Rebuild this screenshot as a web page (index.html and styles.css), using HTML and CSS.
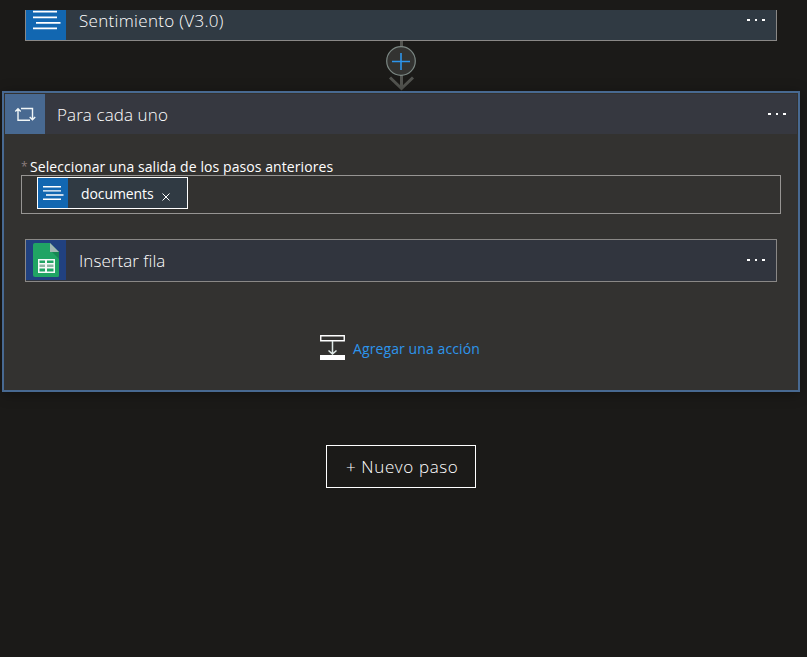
FILE: index.html
```html
<!DOCTYPE html>
<html lang="es">
<head>
<meta charset="utf-8">
<title>Flujo</title>
<link rel="stylesheet" href="styles.css">
</head>
<body>
<main class="canvas">
  <section class="card card-cut">
    <div class="tile tile-text">
      <svg width="40" height="30" viewBox="0 0 40 30"><path d="M7 1.7H31M7 7.4H31M10 12.9H34.500M7 18.400H31" stroke="#fff" stroke-width="1.8"/></svg>
    </div>
    <h2 class="title t-sent">Sentimiento (V3.0)</h2>
    <span class="dots"><i></i><i></i><i></i></span>
  </section>

  <div class="connector">
    <svg width="32" height="50" viewBox="0 0 32 50">
      <path d="M16.500 0V47" stroke="#52534f" stroke-width="3"/>
      <path d="M5 36.500L16.500 47.500L28 36.500" fill="none" stroke="#52534f" stroke-width="3"/>
      <circle cx="16" cy="20" r="14.300" fill="#333331" stroke="#7b8783" stroke-width="1.200"/>
      <path d="M7 20.500H25M16 12V29" stroke="#2d95ec" stroke-width="1.600"/>
    </svg>
  </div>

  <section class="scope">
    <header class="scope-head">
      <div class="tile tile-loop">
        <svg width="40" height="40" viewBox="0 0 40 40"><path d="M13 15V26.300H25M10.300 17.500L13 14.800L15.700 17.500M16 14.500H27.500V25M24.700 23L27.500 25.800L30.200 23" fill="none" stroke="#f0f6f7" stroke-width="1.400"/></svg>
      </div>
      <h2 class="title t-loop">Para cada uno</h2>
      <span class="dots"><i></i><i></i><i></i></span>
    </header>
    <div class="scope-body">
      <label class="label"><span class="req">*</span><span class="label-text">Seleccionar una salida de los pasos anteriores</span></label>
      <div class="field">
        <div class="token">
          <div class="tile tile-token">
            <svg width="30" height="30" viewBox="0 0 30 30"><path d="M5 8.700H23M5 12.900H23M8 17H25.500M5 21.200H23" stroke="#fff" stroke-width="1.400"/></svg>
          </div>
          <span class="token-text">documents</span>
          <svg class="close" width="8" height="8" viewBox="0 0 8 8"><path d="M.5 .5L7.500 7.500M7.500 .5L.5 7.500" stroke="#fff" stroke-width="1"/></svg>
        </div>
      </div>
      <section class="card card-row">
        <div class="tile tile-sheet">
          <svg width="40" height="40" viewBox="0 0 40 40">
            <path d="M9 3H24L33 12V35.500Q33 37 31.500 37H9Q7 37 7 35V5Q7 3 9 3Z" fill="#20a464"/>
            <path d="M25 11L33 19V11Z" fill="#168653"/>
            <path d="M24 3L33 12H24Z" fill="#a4b8b4"/>
            <path d="M12 19H29V33H12Z" fill="#f4f9f8"/>
            <path d="M13.500 20.500H19V23H13.500ZM21 20.500H27.500V23H21ZM13.500 28.500H19V31.500H13.500ZM21 28.500H27.500V31.500H21Z" fill="#20a464"/>
            <path d="M13.500 24.500H19V27H13.500ZM21 24.500H27.500V27H21Z" fill="#8fb5a5"/>
          </svg>
        </div>
        <h2 class="title t-row">Insertar fila</h2>
        <span class="dots"><i></i><i></i><i></i></span>
      </section>
      <a class="add">
        <svg width="25" height="25" viewBox="0 0 25 25"><path d="M.75 .75H24.250V5.750H.75Z" fill="none" stroke="#fff" stroke-width="1.400"/><path d="M12.500 6V19M8.500 15.500L12.500 19L16.500 15.500" fill="none" stroke="#dfe9e7" stroke-width="1.500"/><path d="M0 20H25V25H0Z" fill="#fff"/></svg>
        <span class="add-text">Agregar una acción</span>
      </a>
    </div>
  </section>

  <button class="new-step"><span class="new-text">+ Nuevo paso</span></button>
</main>
</body>
</html>
```
FILE: styles.css
```css
* { box-sizing: border-box; }
body { margin: 0; background: #1b1a18; color: #fff; font-family: "Open Sans", "Noto Sans", sans-serif; font-weight: 400; }
svg { display: block; flex: none; }
.canvas { height: 657px; padding-top: 10px; overflow: hidden; display: flex; flex-direction: column; }
.card { display: flex; border: 1px solid #8a8886; width: 752px; }
.card-cut { height: 31px; flex: none; margin-left: 25px; border-top: 0; background: #303a43; }
.card-row { height: 43px; margin: 25px 0 0 21px; background: #31353e; }
.tile { width: 40px; height: 40px; flex: none; }
.tile-text { height: 30px; background: #1267b1; }
.tile-loop { background: #486991; }
.tile-sheet { background: #21417f; }
.tile-token { width: 30px; height: 30px; background: #1267b1; }
.title { margin: 0 0 0 13px; font-size: 17px; font-weight: 300; line-height: 42px; white-space: nowrap; }
.t-sent { line-height: 22px; letter-spacing: .32px; }
.t-loop { margin-left: 12px; letter-spacing: .1px; }
.t-row { letter-spacing: .05px; }
.dots { display: flex; justify-content: space-between; width: 18px; height: 2px; margin: 19px 11px 0 auto; }
.dots i { width: 3px; background: #fff; }
.dots i:nth-child(2) { width: 2px; }
.card-cut .dots { margin-top: 9px; }
.connector { height: 50px; padding-left: 385px; flex: none; }
.scope { width: 798px; height: 301px; flex: none; margin-left: 2px; border: 2px solid #486991; background: #333230; box-shadow: 0 2px 12px rgba(0, 0, 0, .35); }
.scope-head { display: flex; height: 40px; margin: 1px 1px 0; background: #363840; }
.scope-body { display: flex; flex-direction: column; }
.label { display: flex; height: 20px; margin: 21px 0 0 17px; font-size: 14px; line-height: 24px; white-space: nowrap; }
.label-text { letter-spacing: .085px; }
.req { width: 9px; color: #8b7c7c; font-size: 12px; }
.field { width: 760px; height: 39px; margin-left: 17px; padding: 1px 0 0 15px; border: 1px solid #979593; }
.token { display: flex; width: 151px; height: 32px; border: 1px solid #fff; background: #303a43; }
.token-text { width: 74px; margin-left: 13px; font-size: 14px; letter-spacing: -.1px; line-height: 31px; white-space: nowrap; }
.close { margin: 15px 0 0 7px; }
.add { display: flex; height: 25px; margin: 53px 0 0 316px; color: #2d95ec; }
.add-text { margin-left: 8px; font-size: 14px; letter-spacing: .1px; line-height: 28px; white-space: nowrap; }
.new-step { width: 150px; height: 43px; flex: none; margin: 53px 0 0 326px; padding: 0 0 0 19px; border: 1px solid #fff; background: transparent; color: #fff; font: 300 17px/41px "Open Sans", sans-serif; letter-spacing: .62px; text-align: left; white-space: nowrap; }
```
